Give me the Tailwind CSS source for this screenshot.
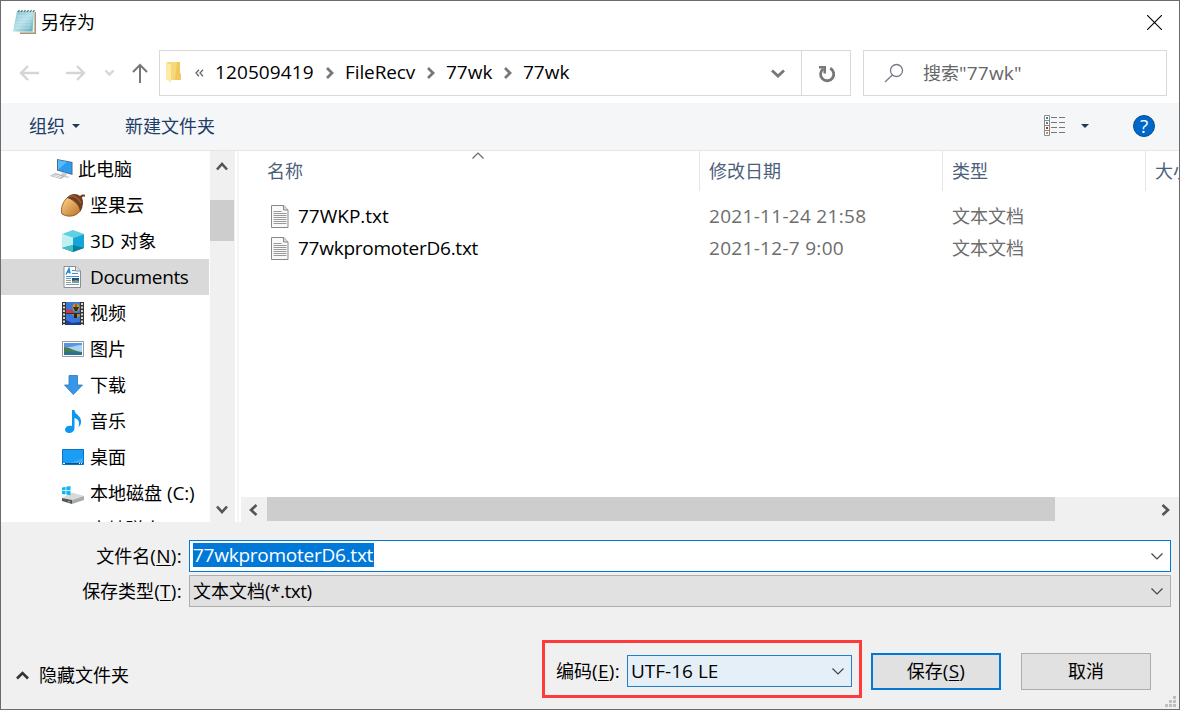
<!DOCTYPE html>
<html lang="zh-CN">
<head>
    <meta charset="UTF-8">
    <meta name="viewport" content="width=device-width, initial-scale=1.0">
    <title>另存为</title>
    <script src="https://cdn.jsdelivr.net/npm/@tailwindcss/browser@4"></script>
</head>
<body class="w-[1180px] h-[710px] overflow-hidden font-['Open_Sans','Noto_Sans_CJK_SC',sans-serif] font-[375] text-[18px] leading-6 text-black whitespace-nowrap">
    <div class="w-[1180px] h-[710px] border border-[#6b6b6b] bg-white flex flex-col overflow-hidden">

        <!-- Title bar -->
        <div class="h-[49px] shrink-0 flex items-start justify-between pl-[11px] pr-[16px]">
            <div class="flex pt-[7px]">
                <svg class="w-[26px] h-[28px]" viewBox="0 0 26 28">
                    <defs>
                        <linearGradient id="pad" x1="0" y1="0" x2="1" y2="1">
                            <stop offset="0" stop-color="#7fc0d0"/>
                            <stop offset=".5" stop-color="#b5e0e9"/>
                            <stop offset="1" stop-color="#5aa9bd"/>
                        </linearGradient>
                    </defs>
                    <path d="M7 4h17v22H8z" fill="#a3957a"/>
                    <path d="M5 3h17.500v21.500H6z" fill="#f3efe2"/>
                    <path d="M5 3h17l-1.500 20.500H1z" fill="url(#pad)"/>
                    <path d="M5 8h15M5 11h15M4 14h15M4 17h15M4 20h14" stroke="#d5eef3" stroke-width=".6"/>
                    <path d="M6 4l1.500-2M9 4l1.500-2M12 4l1.500-2M15 4l1.500-2M18 4l1.500-2M21 4l1.500-2" stroke="#55666c" stroke-width="1.200"/>
                </svg>
                <span class="ml-[3px] pt-[2px]">另存为</span>
            </div>
            <svg class="w-[15px] h-[15px] mt-[14px] mr-px" viewBox="0 0 15 15" stroke="#000" stroke-width="1.100">
                <path d="M0 0l15 15M15 0L0 15"/>
            </svg>
        </div>

        <!-- Navigation -->
        <div class="h-[53px] shrink-0 flex items-start">
            <svg class="w-[158px] h-[46px]" viewBox="0 0 158 46" fill="none" stroke-width="2">
                <path d="M20 23h18M27 16l-7 7 7 7" stroke="#d5d5d5" stroke-width="2.400"/>
                <path d="M65 23h18M76 16l7 7-7 7" stroke="#d5d5d5" stroke-width="2.400"/>
                <path d="M104.500 20.500l4 4 4-4" stroke="#d5d5d5" stroke-width="2.400"/>
                <path d="M139 33V15.500M132 22l7-7 7 7" stroke="#777"/>
            </svg>
            <div class="w-[692px] h-[46px] border border-[#d9d9d9] flex items-center text-[19px]">
                <svg class="w-[15px] h-[22px] ml-[6px] -mt-[2px]" viewBox="0 0 15 22">
                    <path d="M1 1h13v11l.8 1v6H1z" fill="#f6d77a"/>
                    <path d="M11 1h3v11l.8 1v6H9z" fill="#efc75c"/>
                    <path d="M0 1l5 3v17.500L0 18z" fill="#ffe9a8"/>
                </svg>
                <svg class="w-[9px] h-[8px] ml-[14px]" viewBox="0 0 9 8" fill="none" stroke="#666" stroke-width="1.300"><path d="M4 .8L1 4l3 3.200M8 .8L5 4l3 3.200"/></svg>
                <span class="ml-[11px] w-[99px] pb-[2px] tracking-[0.1px]">120509419</span>
                <svg class="w-[8px] h-[12px] ml-[12px]" viewBox="0 0 8 12" fill="none" stroke="#777" stroke-width="2.800"><path d="M1 1l5 5-5 5"/></svg>
                <span class="ml-[11px] w-[71px] pb-[2px] tracking-[-0.1px]">FileRecv</span>
                <svg class="w-[8px] h-[12px] ml-[11px]" viewBox="0 0 8 12" fill="none" stroke="#777" stroke-width="2.800"><path d="M1 1l5 5-5 5"/></svg>
                <span class="ml-[11px] w-[46px] pb-[2px]">77wk</span>
                <svg class="w-[8px] h-[12px] ml-[12px]" viewBox="0 0 8 12" fill="none" stroke="#777" stroke-width="2.800"><path d="M1 1l5 5-5 5"/></svg>
                <span class="ml-[11px] w-[46px] pb-[2px]">77wk</span>
                <svg class="w-[14px] h-[9px] ml-auto mr-[16px]" viewBox="0 0 14 9" fill="none" stroke="#777" stroke-width="2.800"><path d="M1 1.500l6 5.500 6-5.500"/></svg>
                <div class="w-[49px] h-full border-l border-[#d9d9d9] flex items-center justify-center">
                    <svg class="w-[18px] h-[18px] mt-px ml-[2px]" viewBox="0 0 18 18">
                        <path d="M5.300 3.800A6.600 6.600 0 1 0 12.200 3.300" fill="none" stroke="#777" stroke-width="2.800"/>
                        <path d="M1 1h7v7.500H5.500V3.500H1z" fill="#777"/>
                    </svg>
                </div>
            </div>
            <div class="ml-[12px] w-[304px] h-[46px] border border-[#d9d9d9] flex items-center text-[#666]">
                <svg class="w-[20px] h-[20px] ml-[20px]" viewBox="0 0 20 20" fill="none" stroke="#7b7b86" stroke-width="1.300">
                    <circle cx="12.500" cy="7.500" r="6"/><path d="M8.300 12L1 19"/>
                </svg>
                <span class="ml-[19px] flex pb-px">搜索<span class="text-[19px] tracking-[0.2px]">"77wk"</span></span>
            </div>
        </div>

        <!-- Command bar -->
        <div class="h-[48px] shrink-0 bg-[#f5f6f8] border-b border-[#e6e6e6] pb-[2px] flex items-center text-[#1e3c68]">
            <span class="ml-[28px]">组织</span>
            <svg class="w-[8px] h-[4px] ml-[7px]" viewBox="0 0 8 4"><path d="M0 0h8L4 4z" fill="#1e395b"/></svg>
            <span class="ml-[45px]">新建文件夹</span>
            <svg class="w-[22px] h-[22px] ml-auto" viewBox="0 0 22 22">
                <path d="M.5.500h5v20h-5zM.5 5.500h5M.5 10.500h5M.5 15.500h5" fill="#fff" stroke="#8a8a8a"/>
                <path d="M2 2h2v2H2z" fill="#3e80a8"/>
                <path d="M2 7h2v2H2z" fill="#4b8a8a"/>
                <path d="M2 12h2v2H2z" fill="#d02020"/>
                <path d="M2 17h2v2H2z" fill="#a0a060"/>
                <path d="M7 2.500h6M15 2.500h6M7 7.500h6M15 7.500h6M7 12.500h6M15 12.500h6M7 17.500h6M15 17.500h6" stroke="#777"/>
            </svg>
            <svg class="w-[8px] h-[4px] ml-[15px]" viewBox="0 0 8 4"><path d="M0 0h8L4 4z" fill="#1e395b"/></svg>
            <div class="ml-[44px] mr-[24px] w-[22px] h-[22px] rounded-full border border-[#0a4b8c] bg-[#0067cb] text-white text-[19px] font-medium flex items-center justify-center">?</div>
        </div>

        <!-- Folder tree and file list -->
        <div class="h-[371px] shrink-0 flex">
            <div class="w-[209px] overflow-hidden">
                <div class="h-9 pl-[49px] flex items-center">
                    <svg class="w-[24px] h-[24px]" viewBox="0 0 24 24">
                        <path d="M7 2l15.500 3v13L7 13.500z" fill="#4a6b85"/>
                        <path d="M8 3l13.500 2.800v11L8 12.800z" fill="#2a9df0"/>
                        <path d="M8 3l9 1.900-9 7.900z" fill="#5bb8f8"/>
                        <path d="M12 15l5 1.500-1 2.500 4 1-3 1-6-2z" fill="#c5ccd2"/>
                        <path d="M5 16l10 3-4 3-11-3z" fill="#aab4bd"/>
                        <path d="M4 17.500l8 2.300M2.500 18.500l8 2.300" stroke="#eef1f3"/>
                    </svg>
                    <span class="ml-[4px]">此电脑</span>
                </div>
                <div class="h-9 pl-[60px] flex items-center">
                    <svg class="w-[24px] h-[24px]" viewBox="0 0 24 24">
                        <defs><linearGradient id="nut" x1="0" y1="0" x2="1" y2="1"><stop offset="0" stop-color="#ffd88f"/><stop offset="1" stop-color="#b96a22"/></linearGradient></defs>
                        <path d="M7 4C2 8-1 16 1 21c6 4 17 3 20-7z" fill="url(#nut)" stroke="#8a4b16" stroke-width=".8"/>
                        <path d="M6 5C9 0 16 0 19 3c1-1 3-2 5-1v2c-2-1-3 0-3 1 2 4 1 9-2 14 0-6-6-13-13-14z" fill="#70401f"/>
                        <path d="M8 3.500C13 2 18 5 20 10" stroke="#966038" fill="none" stroke-width="1.500"/>
                    </svg>
                    <span class="ml-[5px]">坚果云</span>
                </div>
                <div class="h-9 pl-[61px] flex items-center">
                    <svg class="w-[22px] h-[22px]" viewBox="0 0 22 22">
                        <path d="M11 0l11 4-11 4L0 4z" fill="#5ed0df"/>
                        <path d="M0 4l11 4v14L0 18z" fill="#bff0f2"/>
                        <path d="M22 4L11 8v14l11-4z" fill="#16a5d8"/>
                        <path d="M11 15l11 3-11 4-11-4z" fill="#087f9c"/>
                        <path d="M11 15v7L0 18z" fill="#42bfcb"/>
                    </svg>
                    <span class="ml-[6px] flex"><span class="text-[19px] mr-[6px] tracking-[-0.2px]">3D</span>对象</span>
                </div>
                <div class="h-9 pl-[62px] w-[208px] bg-[#d9d9d9] flex items-center">
                    <svg class="w-[19px] h-[22px]" viewBox="0 0 19 22">
                        <path d="M1 .5h12l4.500 4.500v16.500H1z" fill="#fff" stroke="#85909a"/>
                        <path d="M12.500.5V5h5" fill="#dfe4e8" stroke="#85909a"/>
                        <path d="M3 8.500l3-6 1 5M4 6h3" stroke="#1984d8" fill="none" stroke-width="1.300"/>
                        <path d="M9 4.500h3M9 7.500h6M3 10.500h13" stroke="#3794d8"/>
                        <path d="M3 12.500h5M3 14.500h5M3 16.500h5M3 18.500h13" stroke="#8e9aa5"/>
                        <path d="M9 12h7v5H9z" fill="#24527c"/><path d="M9 15l4-1 3 1v2H9z" fill="#7f9c93"/>
                    </svg>
                    <span class="ml-[8px] text-[19px] tracking-[-0.35px]">Documents</span>
                </div>
                <div class="h-9 pl-[61px] flex items-center">
                    <svg class="w-[22px] h-[23px]" viewBox="0 0 22 23">
                        <path d="M0 0h22v23H0z" fill="#343434"/>
                        <path d="M4 0h14v11H4zM4 12h14v11H4z" fill="#3976d8"/>
                        <path d="M4 7l6 1 2 3H4z" fill="#ce3846"/>
                        <ellipse cx="14" cy="5.500" rx="3.500" ry="4" fill="#c99a1c"/>
                        <path d="M11 5h6l-2 4h-2z" fill="#38261c"/><path d="M14 2v5" stroke="#702c1c"/>
                        <path d="M10 12h8c0 4-5 5-8 0z" fill="#b98e20"/><path d="M12 12h3v4h-3z" fill="#302114"/>
                        <path d="M4 18l6 3 8-1v3H4z" fill="#163f98"/>
                        <path d="M2 1v22M20 1v22" stroke="#fff" stroke-width="1.600" stroke-dasharray="2 1.500"/>
                    </svg>
                    <span class="ml-[6px]">视频</span>
                </div>
                <div class="h-9 pl-[61px] flex items-center">
                    <svg class="w-[22px] h-[16px]" viewBox="0 0 22 16">
                        <path d="M.5.500h21v15H.5z" fill="#fff" stroke="#999"/>
                        <path d="M2 2h18v12H2z" fill="#a9d4f5"/>
                        <path d="M2 2h18v2c-7 0-9 3-18 2z" fill="#5a94e0"/>
                        <path d="M2 6c6 0 9 4 18 5v1H2z" fill="#487c55"/>
                        <path d="M2 11l18 .5V14H2z" fill="#2e7094"/>
                    </svg>
                    <span class="ml-[6px]">图片</span>
                </div>
                <div class="h-9 pl-[63px] flex items-center">
                    <svg class="w-[19px] h-[20px]" viewBox="0 0 19 20"><path d="M5 .5h8.500v9.500h5L9.300 19.500.5 10H5z" fill="#3996e6" stroke="#2478c0" stroke-width=".8"/></svg>
                    <span class="ml-[7px]">下载</span>
                </div>
                <div class="h-9 pl-[64px] flex items-center">
                    <svg class="w-[17px] h-[23px]" viewBox="0 0 17 23">
                        <path d="M7 0h2.500c0 5 7 5 6.500 12 0 2-1 4-2.500 5 1.500-5 0-8-4-9v10c0 6-9 6.500-9.500 2C0 16.500 3.500 15 7 16z" fill="#0c97f2"/>
                    </svg>
                    <span class="ml-[8px]">音乐</span>
                </div>
                <div class="h-9 pl-[61px] flex items-center">
                    <svg class="w-[22px] h-[16px]" viewBox="0 0 22 16">
                        <path d="M.5.500h21v15H.5z" fill="#1a9df5" stroke="#0875bd"/>
                        <path d="M21 1v8L8 14h13z" fill="#39aefa"/>
                        <path d="M1 14.500h20" stroke="#07538a"/><path d="M1 14.500h2M17 14.500h1M19 14.500h1" stroke="#fff"/>
                    </svg>
                    <span class="ml-[6px]">桌面</span>
                </div>
                <div class="h-9 pl-[61px] flex items-center">
                    <svg class="w-[22px] h-[18px] mt-[3px]" viewBox="0 0 22 18">
                        <path d="M0 12l10-5.500 12 3.500-12 4z" fill="#d9d9db"/>
                        <path d="M0 12l10 2v4L0 15z" fill="#555"/>
                        <path d="M10 14l12-4v4l-12 4z" fill="#aaa"/>
                        <path d="M6 14.800l2 .5v1.200l-2-.5z" fill="#52df57"/>
                        <path d="M0 1.500l3.500-.5v3.200H0zM4.300.800L8.500 0v4.200H4.300zM0 5h3.500v3.500L0 8zM4.300 5h4.200v4.200l-4.200-.6z" fill="#08b8ef"/>
                    </svg>
                    <span class="ml-[6px] flex">本地磁盘<span class="ml-[5px] text-[19px] tracking-[-0.2px]">(C:)</span></span>
                </div>
                <div class="h-9 pl-[89px] flex items-center">本地磁盘</div>
            </div>
            <div class="w-[25px] bg-[#f0f0f0] flex flex-col">
                <svg class="w-[12px] h-[9px] ml-[6px] mt-[11px]" viewBox="0 0 12 9" fill="none" stroke="#555" stroke-width="2.600"><path d="M1 7.500l5-5.500 5 5.500"/></svg>
                <div class="w-[24px] h-[41px] mt-[29px] bg-[#cdcdcd]"></div>
                <svg class="w-[12px] h-[9px] ml-[6px] mt-auto mb-[8px]" viewBox="0 0 12 9" fill="none" stroke="#555" stroke-width="2.600"><path d="M1 1.500L6 7l5-5.500"/></svg>
            </div>
            <div class="w-[4px] border-x-2 border-l-white border-r-[#f5f5f5]"></div>
            <div class="flex-1 min-w-0 flex flex-col">
                <div class="relative h-10 flex items-center text-[#4c607a]">
                    <svg class="absolute left-[233px] top-[1px] w-[12px] h-[7px]" viewBox="0 0 12 7" fill="none" stroke="#666" stroke-width="1.200"><path d="M.5 6.500L6 1l5.500 5.500"/></svg>
                    <div class="w-[461px] shrink-0 h-full pl-[28px] border-r border-[#e5e5e5] flex items-center">名称</div>
                    <div class="w-[243px] shrink-0 h-full pl-[9px] border-r border-[#e5e5e5] flex items-center">修改日期</div>
                    <div class="w-[203px] shrink-0 h-full pl-[9px] border-r border-[#e5e5e5] flex items-center">类型</div>
                    <div class="flex-1 min-w-0 overflow-hidden h-full pl-[9px] flex items-center">大小</div>
                </div>
                <div class="mt-[9px] h-8 flex items-center text-[#6d6d6d]">
                    <svg class="w-[18px] h-[23px] ml-[32px]" viewBox="0 0 18 23">
                        <path d="M.5.500h12.500L17 5v17.500H.5z" fill="#f9f9f9" stroke="#888"/><path d="M12.500.500V5H17" fill="#ddd" stroke="#888"/>
                        <path d="M2.500 6.500h8M2.500 8.500h13M2.500 10.500h13M2.500 12.500h13M2.500 14.500h13M2.500 16.500h13M2.500 18.500h13" stroke="#999"/>
                    </svg>
                    <span class="ml-[9px] w-[411px] text-[19px] tracking-[0px] text-black">77WKP.txt</span>
                    <span class="w-[243px] text-[19px] tracking-[0.3px]">2021-11-24 21:58</span>
                    <span>文本文档</span>
                </div>
                <div class="h-8 flex items-center text-[#6d6d6d]">
                    <svg class="w-[18px] h-[23px] ml-[32px]" viewBox="0 0 18 23">
                        <path d="M.5.500h12.500L17 5v17.500H.5z" fill="#f9f9f9" stroke="#888"/><path d="M12.500.500V5H17" fill="#ddd" stroke="#888"/>
                        <path d="M2.500 6.500h8M2.500 8.500h13M2.500 10.500h13M2.500 12.500h13M2.500 14.500h13M2.500 16.500h13M2.500 18.500h13" stroke="#999"/>
                    </svg>
                    <span class="ml-[9px] w-[411px] text-[19px] tracking-[-0.25px] text-black">77wkpromoterD6.txt</span>
                    <span class="w-[243px] text-[19px] tracking-[0.3px]">2021-12-7 9:00</span>
                    <span>文本文档</span>
                </div>
                <div class="mt-auto ml-[2px] h-[25px] bg-[#f0f0f0] flex items-center">
                    <svg class="w-[9px] h-[12px] ml-[8px]" viewBox="0 0 9 12" fill="none" stroke="#555" stroke-width="2.600"><path d="M7.500 1L2 6l5.500 5"/></svg>
                    <div class="ml-[9px] w-[788px] h-[24px] self-start bg-[#cdcdcd]"></div>
                    <svg class="w-[9px] h-[12px] ml-auto mr-[9px]" viewBox="0 0 9 12" fill="none" stroke="#555" stroke-width="2.600"><path d="M1.500 1L7 6l-5.500 5"/></svg>
                </div>
            </div>
        </div>

        <!-- File name, type, encoding -->
        <div class="flex-1 bg-[#f0f0f0] pt-[18px]">
            <div class="flex h-8 items-center">
                <div class="w-[188px] pr-[7px] flex justify-end">文件名<span class="text-[19px] tracking-[0.3px]">(<span class="underline underline-offset-2 decoration-1">N</span>):</span></div>
                <div class="w-[982px] h-full bg-white border border-[#0078d7] flex items-center pl-[3px] pr-[7px] justify-between">
                    <span class="h-6 w-[181px] -mt-[2px] bg-[#0078d7] text-white text-[19px] leading-[24px] tracking-[-0.25px]">77wkpromoterD6.txt</span>
                    <svg class="w-[12px] h-[7px]" viewBox="0 0 12 7" fill="none" stroke="#444" stroke-width="1.200"><path d="M.5.500L6 6 11.500.500"/></svg>
                </div>
            </div>
            <div class="flex h-8 items-center mt-[3px]">
                <div class="w-[188px] pr-[7px] flex justify-end">保存类型<span class="text-[19px] tracking-[0.3px]">(<span class="underline underline-offset-2 decoration-1">T</span>):</span></div>
                <div class="w-[982px] h-full bg-[#e1e1e1] border border-[#adadad] flex items-center pl-[3px] pr-[7px] justify-between">
                    <span class="flex">文本文档<span class="text-[19px] tracking-[-0.5px]">(*.txt)</span></span>
                    <svg class="w-[12px] h-[7px]" viewBox="0 0 12 7" fill="none" stroke="#444" stroke-width="1.200"><path d="M.5.500L6 6 11.500.500"/></svg>
                </div>
            </div>
            <div class="flex mt-[33px] h-[58px]">
                <div class="w-[541px] flex items-center pl-[15px] pt-[12px]">
                    <svg class="w-[13px] h-[9px]" viewBox="0 0 13 9" fill="none" stroke="#333" stroke-width="2.600"><path d="M1 7.500L6.500 2 12 7.500"/></svg>
                    <span class="ml-[10px]">隐藏文件夹</span>
                </div>
                <div class="w-[320px] h-[58px] border-3 border-[#ff3a3a] flex items-center pl-[11px] pt-[4px]">
                    <div class="w-[71px] flex">编码<span class="text-[19px] tracking-[0.3px]">(<span class="underline underline-offset-2 decoration-1">E</span>):</span></div>
                    <div class="w-[225px] h-8 border border-[#2080cc] bg-[#e5eff8] flex items-center justify-between pl-[3px] pr-[7px]">
                        <span class="text-[19px]">UTF-16 LE</span>
                        <svg class="w-[12px] h-[7px]" viewBox="0 0 12 7" fill="none" stroke="#444" stroke-width="1.200"><path d="M.5.500L6 6 11.500.500"/></svg>
                    </div>
                </div>
                <button class="ml-[9px] mt-[13px] w-[130px] h-[37px] pb-[2px] border-2 border-[#0078d7] bg-[#e1e1e1] flex items-center justify-center">保存<span class="text-[19px] tracking-[0.3px]">(<span class="underline underline-offset-2 decoration-1">S</span>)</span></button>
                <button class="ml-[20px] mt-[13px] w-[130px] h-[37px] pb-px border border-[#adadad] bg-[#e1e1e1] flex items-center justify-center">取消</button>
                <svg class="w-[11px] h-[11px] ml-[14px] mt-[56px] shrink-0 overflow-visible" viewBox="0 0 11 11" fill="#bfbfbf">
                    <path d="M8 0h3v3H8zM4 4h3v3H4zM8 4h3v3H8zM0 8h3v3H0zM4 8h3v3H4zM8 8h3v3H8z"/>
                </svg>
            </div>
        </div>
    </div>
</body>
</html>
